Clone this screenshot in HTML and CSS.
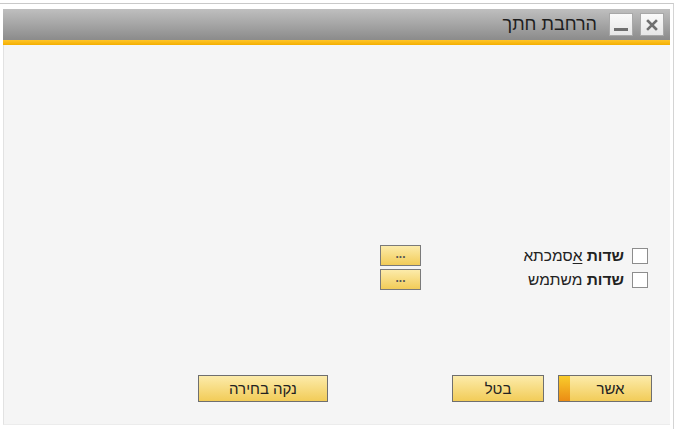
FILE: index.html
```html
<!DOCTYPE html>
<html lang="he">
<head>
  <meta charset="UTF-8">
  <title>הרחבת חתך</title>
  <link rel="stylesheet" href="styles.css">
</head>
<body>
  <div class="screen">
    <div class="window" dir="rtl">
      <div class="titlebar">
        <button class="tb-btn close" title="סגור">
          <svg width="12" height="12" viewBox="0 0 12 12"><path d="M2 2 L10 10 M10 2 L2 10" stroke="#6f6f6f" stroke-width="2.6" stroke-linecap="square"/></svg>
        </button>
        <button class="tb-btn min" title="מזער"><span class="bar"></span></button>
        <span class="title">הרחבת חתך</span>
      </div>
      <div class="accent"></div>
      <div class="content">
        <div class="fields">
          <div class="row">
            <label class="check"><span class="box"></span><b>שדות</b>&nbsp;<u>א</u>סמכתא</label>
            <button class="more">...</button>
          </div>
          <div class="row">
            <label class="check"><span class="box"></span><b>שדות</b>&nbsp;משתמש</label>
            <button class="more">...</button>
          </div>
        </div>
        <div class="actions">
          <button class="btn ok">אשר</button>
          <button class="btn cancel">בטל</button>
          <button class="btn clear">נקה בחירה</button>
        </div>
      </div>
    </div>
  </div>
</body>
</html>
```

FILE: styles.css
```css
:root { font-family: "Liberation Sans", "DejaVu Sans", sans-serif; --yellow-top:#fcebaa; --yellow-bot:#f2cc58; }
body{margin:0;background:#fff;color:#222;}
.screen{margin-top:3px;width:674px;height:426px;border-top:1px solid #c9c9c9;border-right:1px solid #d4d4d4;padding-top:5px;box-sizing:border-box;}
.window{margin-left:3px;width:667px;}
.titlebar{height:31px;display:flex;align-items:center;gap:7px;padding-right:6px;background:linear-gradient(#bfbfbf,#8b8b8b);}
.tb-btn{width:24px;height:23px;padding:0;border:1px solid #a8a8a8;background:linear-gradient(#fafafa,#e6e6e6);display:flex;align-items:center;justify-content:center;}
.min{align-items:flex-end;padding-bottom:4px;}
.min .bar{display:block;width:14px;height:3px;background:#6f6f6f;}
.title{font-size:18px;color:#1e1e1e;margin-right:5px;}
.accent{height:5px;background:linear-gradient(#ffc52a,#f3ae00);}
.content{height:380px;background:#f5f5f5;border-left:1px solid #e2e2e2;border-bottom:1px solid #ececec;box-sizing:border-box;padding:200px 22px 0 0;}
.fields{display:flex;flex-direction:column;gap:3px;}
.row{display:flex;align-items:center;height:21px;}
.check{width:227px;display:flex;align-items:center;font-size:15.5px;color:#222;}
.check u{text-underline-offset:2px;}
.box{width:14px;height:14px;border:1px solid #8d8d8d;background:#fff;margin-left:8px;}
.more{width:41px;height:21px;padding:0 0 4px;border:1px solid #7a7a7a;background:linear-gradient(var(--yellow-top),var(--yellow-bot));font-size:12px;color:#555;font-weight:bold;line-height:1;}
.actions{display:flex;margin-top:85px;margin-right:-4px;}
.btn{height:27px;border:1px solid #6f6f6f;background:linear-gradient(var(--yellow-top),var(--yellow-bot));font-family:inherit;font-size:15px;color:#222;padding:0;}
.ok{width:94px;padding-left:11px;background:linear-gradient(#f9cc2c,#eb8c14) left/11px 100% no-repeat,linear-gradient(var(--yellow-top),var(--yellow-bot));}
.cancel{width:92px;margin-right:14px;}
.clear{width:130px;margin-right:124px;}
```
